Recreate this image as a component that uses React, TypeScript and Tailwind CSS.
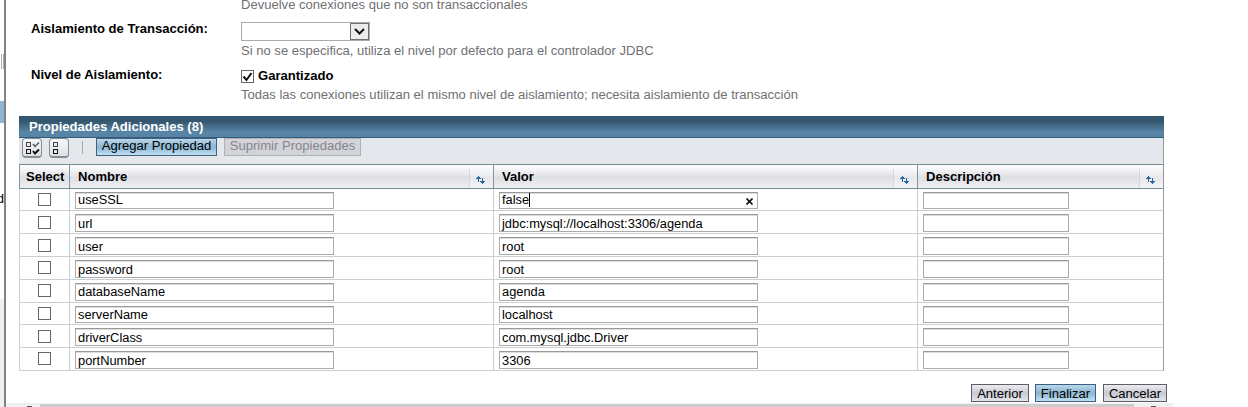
import React from "react";

type Row = { name: string; value: string; h: string; box: string; input: string; focus?: boolean };

const rows: Row[] = [
  { name: "useSSL", value: "false", h: "h-[22px]", box: "mt-[4px]", input: "h-[17px] pb-px", focus: true },
  { name: "url", value: "jdbc:mysql://localhost:3306/agenda", h: "h-[23px]", box: "mt-[5px]", input: "h-[18px] pt-px" },
  { name: "user", value: "root", h: "h-[23px]", box: "mt-[5px]", input: "h-[18px] pt-px" },
  { name: "password", value: "root", h: "h-[23px]", box: "mt-[4px]", input: "h-[18px] pt-px" },
  { name: "databaseName", value: "agenda", h: "h-[23px]", box: "mt-[4px]", input: "h-[18px]" },
  { name: "serverName", value: "localhost", h: "h-[22px]", box: "mt-[4px]", input: "h-[17px]" },
  { name: "driverClass", value: "com.mysql.jdbc.Driver", h: "h-[23px]", box: "mt-[5px]", input: "h-[18px] pt-px" },
  { name: "portNumber", value: "3306", h: "h-[23px]", box: "mt-[4px]", input: "h-[18px] pt-px" },
];

const field =
  "mt-[3px] flex items-center whitespace-nowrap border border-[#ababab] border-t-[#999] bg-white pl-[2px] text-[12.85px] leading-[14px] shadow-[inset_0_1px_0_#ddd]";

function SortIcon() {
  return (
    <div className="mt-[4px] flex h-[19px] w-[24px] border-l border-[#d5d5da] bg-white/30 pl-[6px] pt-[6px]">
      <svg width="10" height="10" viewBox="0 0 10 10" fill="none" stroke="#2864a4" shapeRendering="crispEdges">
        <path d="M2.5 1v6M1 2.5h3M0 3.5h5M6.5 3v6M4 6.5h5M5 7.5h3" />
      </svg>
    </div>
  );
}

function Heading({ label, width }: { label: string; width: string }) {
  return (
    <div className={`flex justify-between border-r border-[#8496a0] ${width}`}>
      <span className="pl-[8px] leading-[24px]">{label}</span>
      <SortIcon />
    </div>
  );
}

export default function App() {
  return (
    <div className="flex h-[407px] w-[1248px] overflow-hidden bg-white font-['Liberation_Sans',Arial,sans-serif] text-[13.05px] text-black">
      <aside className="flex w-[6px] shrink-0 border-r-2 border-[#828282]">
        <div className="flex w-[4px] flex-col overflow-hidden">
          <div className="flex h-[101px] items-start gap-px pt-[54px]">
            <i className="ml-px h-[15px] w-px bg-[#aaa]" />
            <i className="h-[15px] w-px bg-[#aaa]" />
          </div>
          <div className="h-[22px] bg-[#8db4d0]" />
          <div className="flex h-[176px] justify-end pt-[69px]">
            <span className="leading-[14px]">d</span>
          </div>
          <div className="flex-1 bg-[#f0f0f2]" />
        </div>
      </aside>
      <main className="flex w-[1167px] flex-col">
        <section className="flex h-[116px] pl-[25px]">
          <div className="w-[210px] whitespace-nowrap font-bold leading-[16px]">
            <div className="pt-[21px]">Aislamiento de Transacción:</div>
            <div className="pt-[30px]">Nivel de Aislamiento:</div>
          </div>
          <div className="whitespace-nowrap leading-[16px] text-[#6f7073]">
            <div className="-mt-[3px] h-[25px]">Devuelve conexiones que no son transaccionales</div>
            <div className="flex h-[19px] w-[129px] justify-end border border-[#ababab]">
              <div className="flex w-[19px] items-center justify-center border border-[#707070] bg-[#ececec]">
                <svg width="11" height="7" viewBox="0 0 11 7" fill="none" stroke="#111" strokeWidth="2"><path d="M1 1l4.5 4.5L10 1" /></svg>
              </div>
            </div>
            <div className="pt-[2px]">Si no se especifica, utiliza el nivel por defecto para el controlador JDBC</div>
            <div className="mt-[9px] flex h-[16px] items-center">
              <div className="h-[13px] w-[13px] border border-[#666]">
                <svg width="11" height="11" viewBox="0 0 11 11" fill="none" stroke="#111" strokeWidth="2"><path d="M1.5 5.5l3 3.5 5-7" /></svg>
              </div>
              <span className="pl-[4px] font-bold text-black">Garantizado</span>
            </div>
            <div className="pt-[3px]">Todas las conexiones utilizan el mismo nivel de aislamiento; necesita aislamiento de transacción</div>
          </div>
        </section>
        <section className="ml-[13px] w-[1145px]">
          <h2 className="h-[22px] border-b border-[#315b7a] bg-linear-to-b from-[#34566e] from-25% to-[#5884a5] to-75% pl-[10px] font-bold leading-[21px] text-white">Propiedades Adicionales (8)</h2>
          <div className="flex h-[26px] items-start border-r border-[#999] bg-[#e4e7ec]">
            <div className="ml-[3px] flex h-[20px] w-[20px] items-center rounded-[4px] border border-b-2 border-[#888b92] bg-linear-to-b from-[#f6f7f9] to-[#dfe1e6] pl-[2px]">
              <svg width="16" height="14" viewBox="0 0 16 14" className="shrink-0" fill="none" stroke="#111" shapeRendering="crispEdges">
                <path d="M1.5 1.5h4v4h-4z" stroke="#444" /><path d="M1.500 8.500h4v4h-4z" />
                <path d="M8 3l2 2.500 4-4" stroke="#555" strokeWidth="1.500" shapeRendering="auto" />
                <path d="M8 10l2 2.500 4-4" strokeWidth="2" shapeRendering="auto" />
              </svg>
            </div>
            <div className="ml-[7px] flex h-[20px] w-[20px] items-center rounded-[4px] border border-b-2 border-[#888b92] bg-linear-to-b from-[#f6f7f9] to-[#dfe1e6] pl-[2px]">
              <svg width="7" height="14" viewBox="0 0 7 14" fill="none" stroke="#111" shapeRendering="crispEdges"><path d="M1.5 1.5h4v4h-4z" stroke="#444" /><path d="M1.500 8.500h4v4h-4z" /></svg>
            </div>
            <i className="ml-[13px] mt-[3px] h-[13px] w-px bg-[#aaa]" />
            <button className="ml-[13px] h-[18px] w-[121px] border border-[#44627e] bg-linear-to-b from-[#b9d8ea] via-[#8bb5d1] to-[#bfe0f2] pb-[2px] leading-[14px]">Agregar Propiedad</button>
            <button className="ml-[7px] h-[18px] w-[137px] border border-[#b0b1b5] bg-[#d2d4d9] pb-[2px] leading-[14px] text-[#85868a]">Suprimir Propiedades</button>
          </div>
          <div className="flex h-[25px] border border-t-[#748b96] border-r-[#999] border-b-[#748b96] border-l-[#8496a0] bg-linear-to-b from-white via-[#dedfe4] via-55% to-[#f0f0f2] font-bold">
            <div className="w-[50px] border-r border-[#8496a0] pl-[6px] leading-[24px]">Select</div>
            <Heading label="Nombre" width="w-[424px]" />
            <Heading label="Valor" width="w-[424px]" />
            <div className="flex w-[245px] justify-between"><span className="pl-[8px] leading-[24px]">Descripción</span><SortIcon /></div>
          </div>
          {rows.map((r) => (
            <div key={r.name} className={`flex items-start border-b border-l border-r border-[#c9cfd2] border-r-[#999] ${r.h}`}>
              <div className="flex h-full w-[50px] border-r border-[#c9cfd2] pl-[18px]"><div className={`h-[13px] w-[13px] border border-[#666] bg-white ${r.box}`} /></div>
              <div className="h-full w-[424px] border-r border-[#c9cfd2] pl-[5px]"><div className={`${field} ${r.input} w-[259px]`}>{r.name}</div></div>
              <div className="h-full w-[424px] border-r border-[#c9cfd2] pl-[5px]">
                <div className={`${field} ${r.input} w-[259px]`}>
                  {r.value}
                  {r.focus && <><i className="h-[14px] w-px bg-black" /><svg className="ml-auto mr-[4px] mt-[2px]" width="7" height="7" viewBox="0 0 7 7" stroke="#111" strokeWidth="1.600"><path d="M.5.5l6 6M6.500.5l-6 6" /></svg></>}
                </div>
              </div>
              <div className="pl-[5px]"><div className={`${field} ${r.input} w-[146px]`} /></div>
            </div>
          ))}
        </section>
        <div className="flex h-[32px] items-start pl-[965px] pt-[13px]">
          <button className="h-[18px] w-[58px] shrink-0 border border-[#5c5d66] bg-linear-to-b from-[#ececf0] via-[#c9cad3] to-[#e6e6eb] leading-[15px]">Anterior</button>
          <button className="ml-[6px] h-[18px] w-[61px] shrink-0 border border-[#3c5e80] bg-linear-to-b from-[#b9d8ea] via-[#8bb5d1] to-[#bfe0f2] leading-[15px]">Finalizar</button>
          <button className="ml-[7px] h-[18px] w-[64px] shrink-0 border border-[#5c5d66] bg-linear-to-b from-[#ececf0] via-[#c9cad3] to-[#e6e6eb] leading-[15px]">Cancelar</button>
        </div>
        <div className="flex h-[4px] bg-[#f0f0f0] pt-px">
          <i className="ml-[21px] mt-[2px] h-px w-[5px] bg-[#555]" />
          <i className="ml-[8px] h-[3px] w-[1094px] bg-[#cdcdcd]" />
          <i className="ml-[17px] mt-[2px] h-px w-[5px] bg-[#555]" />
        </div>
      </main>
    </div>
  );
}
